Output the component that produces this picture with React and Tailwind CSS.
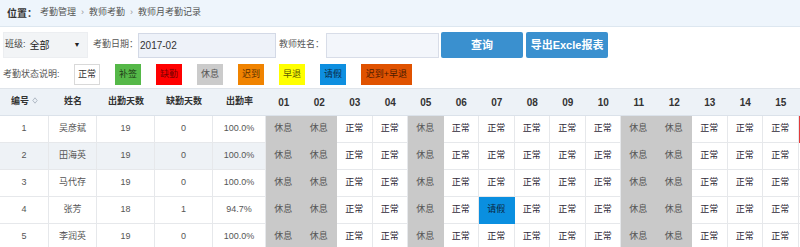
import React from "react";

const legend = [
  { t: "正常", c: "bg-white border border-[#d9d9d9] text-[#333]" },
  { t: "补签", c: "bg-[#55b848] text-[#1e3a17]" },
  { t: "缺勤", c: "bg-[#ff0000] text-[#7a0000]" },
  { t: "休息", c: "bg-[#cbcbcb] text-[#555]" },
  { t: "迟到", c: "bg-[#f08300] text-[#5a2e00]" },
  { t: "早退", c: "bg-[#ffff00] text-[#5a5a00]" },
  { t: "请假", c: "bg-[#0e8fe0] text-[#0a2c4a]" },
  { t: "迟到+早退", c: "bg-[#e05200] text-[#4a1a00]", w: "w-[51px]" },
];

const baseDays = ["休息","休息","正常","正常","休息","正常","正常","正常","正常","正常","休息","休息","正常","正常","正常"];

const rows = [
  { id: 1, name: "吴彦斌", att: 19, abs: 0, rate: "100.0%", extra: "red" },
  { id: 2, name: "田海英", att: 19, abs: 0, rate: "100.0%", stripe: true },
  { id: 3, name: "马代存", att: 19, abs: 0, rate: "100.0%" },
  { id: 4, name: "张芳", att: 18, abs: 1, rate: "94.7%", leave: 6 },
  { id: 5, name: "李润英", att: 19, abs: 0, rate: "100.0%" },
];

function SortIcon() {
  return (
    <svg width="6" height="7" viewBox="0 0 6 7" className="inline-block ml-[3px] align-[0px]">
      <path d="M3 0.8 L5.2 3.5 L3 6.2 L0.8 3.5 Z" fill="none" stroke="#aab4c0" strokeWidth="0.9" />
    </svg>
  );
}

export default function App() {
  const font = "font-['Liberation_Sans','Noto_Sans_CJK_SC',sans-serif]";
  const dayNums = Array.from({ length: 15 }, (_, i) => String(i + 1).padStart(2, "0"));
  const infoCell = (stripe) =>
    `text-center border-r border-b border-[#e6e8eb] text-[9px] text-[#555] ${stripe ? "bg-[#eef2f6]" : "bg-white"}`;

  return (
    <div className={`w-[800px] h-[247px] overflow-hidden bg-white ${font}`}>
      {/* breadcrumb */}
      <div className="h-[27px] bg-[#eef5fc] border-b border-[#dde7f0] flex items-center pl-[7px] text-[9px] text-[#555]">
        <span className="font-bold text-[#333] text-[10px]">位置：</span>
        <span className="ml-[3px]">考勤管理</span>
        <span className="mx-[5px] text-[#999]">›</span>
        <span>教师考勤</span>
        <span className="mx-[5px] text-[#999]">›</span>
        <span>教师月考勤记录</span>
      </div>

      {/* filter row */}
      <div className="mt-[5px] h-[26px] flex items-center text-[9px] text-[#555]">
        <div className="ml-[3px] w-[85px] h-[26px] bg-[#f2f4f6] border border-[#eceef1] flex items-center pl-[1px]">
          <span className="text-[#444]">班级:</span>
          <span className="ml-[4px] text-[10px] text-[#222]">全部</span>
          <span className="ml-[24px] text-[7px] text-[#222]">▼</span>
        </div>
        <span className="ml-[5px]">考勤日期：</span>
        <div className="w-[138px] h-[25px] bg-[#eef2f9] border border-[#d3d9e6] flex items-center pl-[1px] text-[10px] text-[#333]">
          2017-02
        </div>
        <span className="ml-[3px]">教师姓名：</span>
        <div className="ml-[2px] w-[113px] h-[25px] bg-[#f3f6fb] border border-[#d8dde8]" />
        <button className="ml-[2px] w-[82px] h-[26px] rounded-[2px] bg-[#3a90cf] text-white font-bold text-[11px]">
          查询
        </button>
        <button className="ml-[3px] w-[82px] h-[26px] rounded-[2px] bg-[#3a90cf] text-white font-bold text-[11px]">
          导出Excle报表
        </button>
      </div>

      {/* legend */}
      <div className="mt-[6px] h-[21px] flex items-center text-[9px]">
        <span className="ml-[3px] w-[71px] text-[#555]">考勤状态说明:</span>
        <div className="flex gap-[15px]">
          {legend.map((l) => (
            <div key={l.t} className={`${l.w || "w-[26px]"} h-[21px] flex items-center justify-center ${l.c}`}>
              {l.t}
            </div>
          ))}
        </div>
      </div>

      {/* table */}
      <div className="mt-[3px] border-t border-[#dfe4ea]">
        <table className="table-fixed border-separate border-spacing-0 w-[834px]">
          <colgroup>
            <col className="w-[49px]" />
            <col className="w-[48px]" />
            <col className="w-[58px]" />
            <col className="w-[58px]" />
            <col className="w-[53px]" />
            {dayNums.map((d) => (
              <col key={d} className="w-[35.5px]" />
            ))}
            <col className="w-[35.5px]" />
          </colgroup>
          <thead>
            <tr className="h-[27px] bg-[#edf2f7]">
              <th className="border-b border-[#dbe2ea] font-bold text-[9px] text-[#333]">
                编号<SortIcon />
              </th>
              {["姓名", "出勤天数", "缺勤天数", "出勤率"].map((h) => (
                <th key={h} className="border-b border-[#dbe2ea] font-bold text-[9px] text-[#333]">
                  {h}
                </th>
              ))}
              {dayNums.map((d) => (
                <th key={d} className="border-b border-[#dbe2ea] font-bold text-[10px] text-[#333]">
                  {d}
                </th>
              ))}
              <th className="border-b border-[#dbe2ea]" />
            </tr>
          </thead>
          <tbody>
            {rows.map((r) => (
              <tr key={r.id} className="h-[27px]">
                <td className={infoCell(r.stripe)}>{r.id}</td>
                <td className={infoCell(r.stripe)}>{r.name}</td>
                <td className={infoCell(r.stripe)}>{r.att}</td>
                <td className={infoCell(r.stripe)}>{r.abs}</td>
                <td className={infoCell(r.stripe)}>{r.rate}</td>
                {baseDays.map((d, i) => {
                  const v = r.leave === i ? "请假" : d;
                  let cls = "bg-white border-[#e6e8eb] text-[#2f2a38]";
                  if (v === "休息") cls = "bg-[#c9c9c9] border-[#c9c9c9] text-[#555]";
                  if (v === "请假") cls = "bg-[#0a8fe0] border-[#0a8fe0] text-[#0b2740]";
                  return (
                    <td key={i} className={`text-center text-[9px] border-r border-b ${cls}`}>
                      {v}
                    </td>
                  );
                })}
                <td
                  className={`border-r border-b ${
                    r.extra === "red" ? "bg-[#e23b3b] border-[#e23b3b]" : "bg-white border-[#e6e8eb]"
                  }`}
                />
              </tr>
            ))}
          </tbody>
        </table>
      </div>
    </div>
  );
}
